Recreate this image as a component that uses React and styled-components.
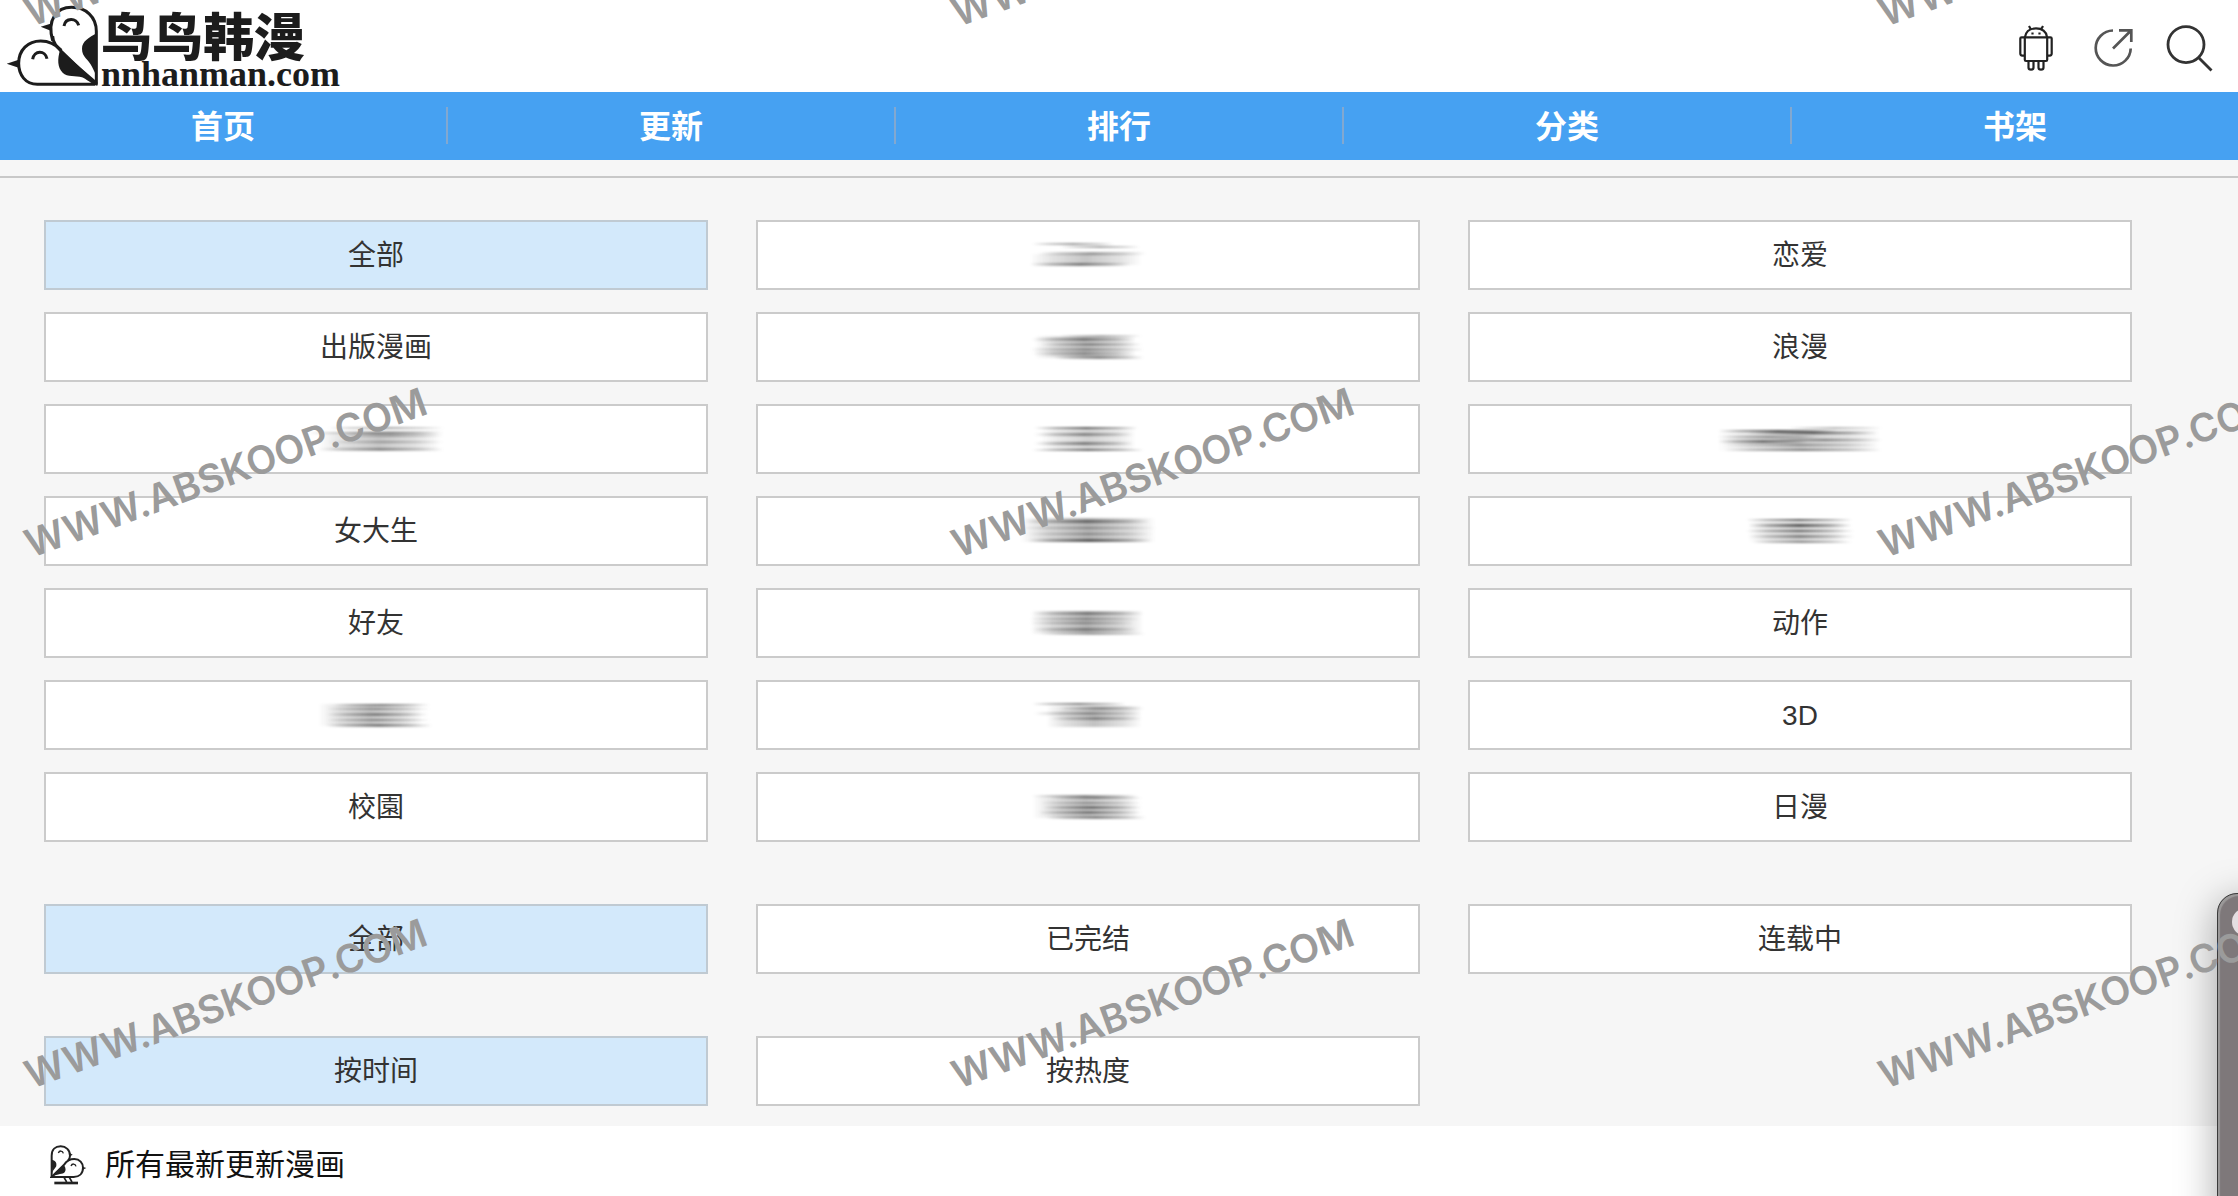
import React from 'react';
import styled, {createGlobalStyle} from 'styled-components';

const sans = '"Liberation Sans", "Noto Sans CJK SC", sans-serif';

const navItems = ['首页', '更新', '排行', '分类', '书架'];

// streak: [x1, x2, y, height, opacity] inside a 26px high strip
const smudges = {
  a: {
    width: 116,
    streaks: [[2, 84, 1, 2, 0.5], [30, 110, 4, 2, 0.45], [8, 116, 10, 3, 0.45], [0, 112, 12, 11, 0.28], [0, 100, 21, 3, 0.55]],
  },
  b: {
    width: 116,
    streaks: [[30, 112, 1, 2, 0.35], [2, 106, 4, 3, 0.55], [10, 112, 9, 3, 0.45], [0, 114, 14, 3, 0.4], [2, 106, 18, 3, 0.42], [24, 114, 22, 3, 0.5], [4, 106, 2, 22, 0.28]],
  },
  c: {
    width: 116,
    streaks: [[4, 108, 1, 2, 0.75], [4, 104, 7, 3, 0.5], [4, 104, 16, 3, 0.55], [2, 114, 23, 2, 0.7], [10, 106, 2, 22, 0.22]],
  },
  d: {
    width: 136,
    streaks: [[0, 136, 0, 24, 0.38], [4, 130, 2, 3, 0.6], [0, 136, 9, 2, 0.35], [6, 132, 15, 2, 0.35], [8, 132, 21, 3, 0.7]],
  },
  e: {
    width: 116,
    streaks: [[0, 114, 1, 23, 0.38], [2, 114, 2, 3, 0.45], [0, 110, 8, 2, 0.4], [0, 104, 12, 2, 0.4], [2, 108, 18, 3, 0.45], [10, 116, 23, 2, 0.35]],
  },
  f: {
    width: 116,
    streaks: [[2, 96, 1, 2, 0.65], [30, 114, 5, 3, 0.4], [4, 112, 10, 3, 0.42], [20, 112, 15, 3, 0.45], [16, 112, 4, 21, 0.3]],
  },
  g: {
    width: 116,
    streaks: [[2, 108, 1, 2, 0.5], [20, 112, 3, 2, 0.5], [10, 112, 8, 2, 0.45], [12, 112, 12, 3, 0.6], [8, 112, 17, 3, 0.55], [16, 116, 22, 3, 0.5], [2, 108, 2, 22, 0.28]],
  },
  h: {
    width: 136,
    streaks: [[20, 136, 1, 2, 0.45], [0, 132, 6, 2, 0.5], [30, 136, 5, 6, 0.3], [20, 136, 15, 2, 0.35], [10, 136, 22, 3, 0.45], [10, 132, 8, 16, 0.28]],
  },
  i: {
    width: 164,
    streaks: [[0, 120, 4, 2, 0.8], [30, 160, 6, 2, 0.8], [0, 100, 10, 2, 0.5], [0, 90, 14, 3, 0.65], [50, 164, 13, 2, 0.55], [70, 164, 1, 2, 0.35], [4, 160, 18, 2, 0.4], [0, 162, 4, 21, 0.28], [6, 164, 23, 2, 0.5]],
  },
  j: {
    width: 116,
    streaks: [[4, 110, 1, 2, 0.8], [6, 110, 6, 3, 0.75], [4, 112, 12, 2, 0.7], [6, 112, 17, 3, 0.5], [10, 110, 23, 2, 0.55], [6, 104, 4, 20, 0.22]],
  },
  k: {
    width: 116,
    streaks: [[16, 112, 2, 2, 0.55], [8, 112, 6, 2, 0.45], [8, 110, 11, 3, 0.5], [8, 112, 17, 2, 0.48], [8, 114, 22, 3, 0.55], [0, 104, 2, 22, 0.28]],
  },
};

const genres = [
  {label: '全部', active: true}, {smudge: 'a'}, {label: '恋爱'},
  {label: '出版漫画'}, {smudge: 'b'}, {label: '浪漫'},
  {smudge: 'h'}, {smudge: 'c'}, {smudge: 'i'},
  {label: '女大生'}, {smudge: 'd'}, {smudge: 'j'},
  {label: '好友'}, {smudge: 'e'}, {label: '动作'},
  {smudge: 'k'}, {smudge: 'f'}, {label: '3D'},
  {label: '校園'}, {smudge: 'g'}, {label: '日漫'},
];

const statuses = [{label: '全部', active: true}, {label: '已完结'}, {label: '连载中'}];

const orders = [{label: '按时间', active: true}, {label: '按热度'}];

const marks = [0, 1, 2].flatMap(row => [0, 1, 2].map(col => ({row, col})));

const GlobalStyle = createGlobalStyle`
  * {
    box-sizing: border-box;
  }
  body {
    margin: 0;
    background: #fff;
    color: #333;
    font-family: ${sans};
  }
`;

const Page = styled.div`
  position: relative;
  min-height: 100vh;
  overflow: hidden;
`;

const Header = styled.header`
  display: flex;
  justify-content: space-between;
  align-items: center;
  height: 92px;
  padding-right: 10px;
`;

const Logo = styled.a`
  display: flex;
  height: 92px;
  color: #1c1c1c;
  text-decoration: none;
`;

const LogoText = styled.span`
  display: flex;
  flex-direction: column;
  padding-top: 10px;
`;

const LogoName = styled.span`
  font-family: "Noto Sans CJK SC", sans-serif;
  font-size: 51px;
  font-weight: 900;
  line-height: 48px;
`;

const LogoDomain = styled.span`
  font-family: "Liberation Serif", serif;
  font-size: 36px;
  font-weight: 700;
  line-height: 32px;
`;

const Actions = styled.div`
  display: flex;
  padding-top: 4px;
`;

const IconButton = styled.button`
  display: flex;
  justify-content: center;
  width: 77px;
  padding: 0;
  border: 0;
  background: none;
  color: ${p => p.$color};
  cursor: pointer;
`;

const Nav = styled.nav`
  display: flex;
  padding: 15px 0 16px;
  background: #46a1f2;
`;

const NavLink = styled.a`
  flex: 1;
  height: 37px;
  border-right: 2px solid #82a8d0;
  color: #fff;
  font-size: 32px;
  font-weight: 700;
  line-height: 41px;
  text-align: center;
  text-decoration: none;
  &:last-child {
    border-right: none;
  }
`;

const Filters = styled.main`
  padding: 16px 0 20px;
  background: #f6f6f6;
`;

const FilterGroups = styled.div`
  display: flex;
  flex-direction: column;
  gap: 62px;
  padding: 42px 106px 0 44px;
  border-top: 2px solid #c8c8c8;
`;

const FilterGrid = styled.div`
  display: grid;
  grid-template-columns: repeat(3, 1fr);
  gap: 22px 48px;
`;

const FilterButton = styled.button`
  display: flex;
  justify-content: center;
  align-items: center;
  height: 70px;
  padding: 2px 0 0;
  border: 2px solid ${p => (p.$active ? '#c0cad2' : '#cbcbcb')};
  background: ${p => (p.$active ? '#d3e9fb' : '#fff')};
  color: #333;
  font-family: inherit;
  font-size: 28px;
  line-height: 40px;
  cursor: pointer;
`;

const SmudgeMark = styled.svg`
  filter: blur(1px);
`;

const SectionTitle = styled.h2`
  display: flex;
  align-items: center;
  gap: 18px;
  margin: 0;
  padding: 19px 50px 0;
  color: #111;
  font-size: 30px;
  font-weight: 400;
  line-height: 40px;
`;

const Drawer = styled.aside`
  position: absolute;
  top: 893px;
  right: -40px;
  bottom: -40px;
  width: 61px;
  border: 1px solid #3a3a3a;
  border-radius: 20px;
  background: #7e787a;
  box-shadow: inset 2px 2px 1px #9c9a9a, 0 8px 40px rgba(0, 0, 0, 0.35);
`;

const DrawerKnob = styled.div`
  width: 28px;
  height: 28px;
  margin: 14px;
  border-radius: 50%;
  background: #e4dee1;
`;

const Watermarks = styled.div`
  position: absolute;
  inset: 0;
  overflow: hidden;
  pointer-events: none;
`;

const Watermark = styled.span`
  position: absolute;
  top: ${p => p.$row * 531 - 7}px;
  left: ${p => p.$col * 927 + 33}px;
  color: #9b9b9b;
  font-family: Inter, sans-serif;
  font-size: 39px;
  font-weight: 600;
  line-height: 40px;
  white-space: nowrap;
  transform: rotate(-20deg);
  transform-origin: left bottom;
`;

const LogoBirds = () => (
  <svg width="101" height="92" viewBox="0 0 303 276" fill="none" stroke="currentColor" strokeWidth="9" aria-hidden="true">
    <path d="M158 122C140 58 170 22 215 22c42 0 74 28 74 72v160" />
    <path d="M158 108c0 20 14 34 28 48l100 96" />
    <path d="M286 253H112C76 253 56 224 56 190c0-40 28-67 66-67 24 0 44 9 62 28" />
    <path d="M20 191l36-12v24zM122 80l34-10v24z" fill="currentColor" stroke="none" />
    <path d="M290 100c-22 12-44 24-44 46 0 26 20 32 30 54 6 12 12 22 14 34z" fill="currentColor" stroke="none" />
    <path d="M180 150c-8 28-8 52 8 68 14 14 40 8 58 14 14 6 26 18 46 26v-12z" fill="currentColor" stroke="none" />
    <path d="M98 178c4-28 38-28 43-2M192 78c4-26 38-26 44-2" />
  </svg>
);

const AndroidIcon = () => (
  <svg width="48" height="48" viewBox="0 0 48 48" fill="none" stroke="currentColor" strokeWidth="2.2" strokeLinejoin="round" aria-hidden="true">
    <path d="M13 13C14 7 18 4.4 24 4.400S34 7 35 13M17 2l2.200 4M31 2l-2.200 4" />
    <path d="M12.800 13.300h22.400v22.500q0 1.200-1.200 1.200H14q-1.200 0-1.200-1.200z" />
    <path d="M12.800 13.300H9.600q-1.300 0-1.300 1.300v15q0 2 2 2h2.500M35.200 13.300h3.200q1.300 0 1.300 1.300v15q0 2-2 2h-2.500" />
    <path d="M16.500 37v6.500q0 2.200 2.500 2.200t2.500-2.200V37M26.500 37v6.500q0 2.200 2.500 2.200t2.500-2.200V37" />
    <path d="M20.500 8.500v2M27.500 8.500v2" />
  </svg>
);

const ShareIcon = () => (
  <svg width="48" height="48" viewBox="0 0 48 48" fill="none" stroke="currentColor" strokeWidth="2.7" aria-hidden="true">
    <path d="M24 6.500A17.500 17.500 0 1 0 41.700 24.500" />
    <path d="M24 24.500L42 6.500M30 6.300h12.300V18" />
  </svg>
);

const SearchIcon = () => (
  <svg width="48" height="48" viewBox="0 0 48 48" fill="none" stroke="currentColor" strokeWidth="2.8" aria-hidden="true">
    <circle cx="20" cy="20.600" r="18" />
    <path d="M32.500 33.500l13 13" />
  </svg>
);

const TitleBirds = () => (
  <svg width="37" height="40" viewBox="0 0 111 120" fill="none" stroke="#222" strokeWidth="6" aria-hidden="true">
    <path d="M5 96V32C5 14 16 4 32 4s28 11 28 28c0 5-2 10-6 15" />
    <path d="M5 96l38-38c8-12 18-16 30-16 16 0 26 12 26 26 0 18-12 28-28 28z" />
    <path d="M59 24l9 5-8 5zM98 65l11 4-11 5z" fill="#222" stroke="none" />
    <path d="M5 44c10 2 16 8 14 18-2 8-8 8-12 22zM4 96c12-18 26-24 38-36 6 10 6 16 2 22-6 8-18 2-40 14z" fill="#222" stroke="none" />
    <path d="M25 24c3-8 13-8 15 1M63 63c3-8 13-8 15 1" strokeWidth="4" />
    <path d="M42 97l8 14M58 97l8 14" strokeWidth="5" />
    <path d="M13 114h71" strokeWidth="8" />
  </svg>
);

const Smudge = ({name}) => {
  const {width, streaks} = smudges[name];
  return (
    <SmudgeMark width={width} height="30" viewBox={`0 0 ${width} 30`} aria-hidden="true">
      <defs>
        <linearGradient id={`smudge-${name}`}>
          <stop offset="0" stopColor="#333" stopOpacity="0" />
          <stop offset="0.2" stopColor="#333" stopOpacity="0.5" />
          <stop offset="0.5" stopColor="#333" stopOpacity="1" />
          <stop offset="0.8" stopColor="#333" stopOpacity="0.5" />
          <stop offset="1" stopColor="#333" stopOpacity="0" />
        </linearGradient>
      </defs>
      {streaks.map(([x1, x2, y, height, opacity]) => (
        <rect
          key={`${x1}-${y}`}
          x={x1}
          y={y + 1}
          width={x2 - x1}
          height={height}
          opacity={opacity}
          fill={`url(#smudge-${name})`}
        />
      ))}
    </SmudgeMark>
  );
};

const FilterGroup = ({items}) => (
  <FilterGrid>
    {items.map(({label, smudge, active}, idx) => (
      <FilterButton key={`f-${idx}`} type="button" $active={active}>
        {label || <Smudge name={smudge} />}
      </FilterButton>
    ))}
  </FilterGrid>
);

const App = () => (
  <Page>
    <GlobalStyle />
    <Header>
      <Logo href="#">
        <LogoBirds />
        <LogoText>
          <LogoName>鸟鸟韩漫</LogoName>
          <LogoDomain>nnhanman.com</LogoDomain>
        </LogoText>
      </Logo>
      <Actions>
        <IconButton type="button" $color="#222"><AndroidIcon /></IconButton>
        <IconButton type="button" $color="#555"><ShareIcon /></IconButton>
        <IconButton type="button" $color="#333"><SearchIcon /></IconButton>
      </Actions>
    </Header>
    <Nav>
      {navItems.map(item => (
        <NavLink key={item} href="#">{item}</NavLink>
      ))}
    </Nav>
    <Filters>
      <FilterGroups>
        <FilterGroup items={genres} />
        <FilterGroup items={statuses} />
        <FilterGroup items={orders} />
      </FilterGroups>
    </Filters>
    <SectionTitle>
      <TitleBirds />
      所有最新更新漫画
    </SectionTitle>
    <Drawer>
      <DrawerKnob />
    </Drawer>
    <Watermarks>
      {marks.map(({row, col}) => (
        <Watermark key={`${row}-${col}`} $row={row} $col={col}>WWW.ABSKOOP.COM</Watermark>
      ))}
    </Watermarks>
  </Page>
);

export default App;
